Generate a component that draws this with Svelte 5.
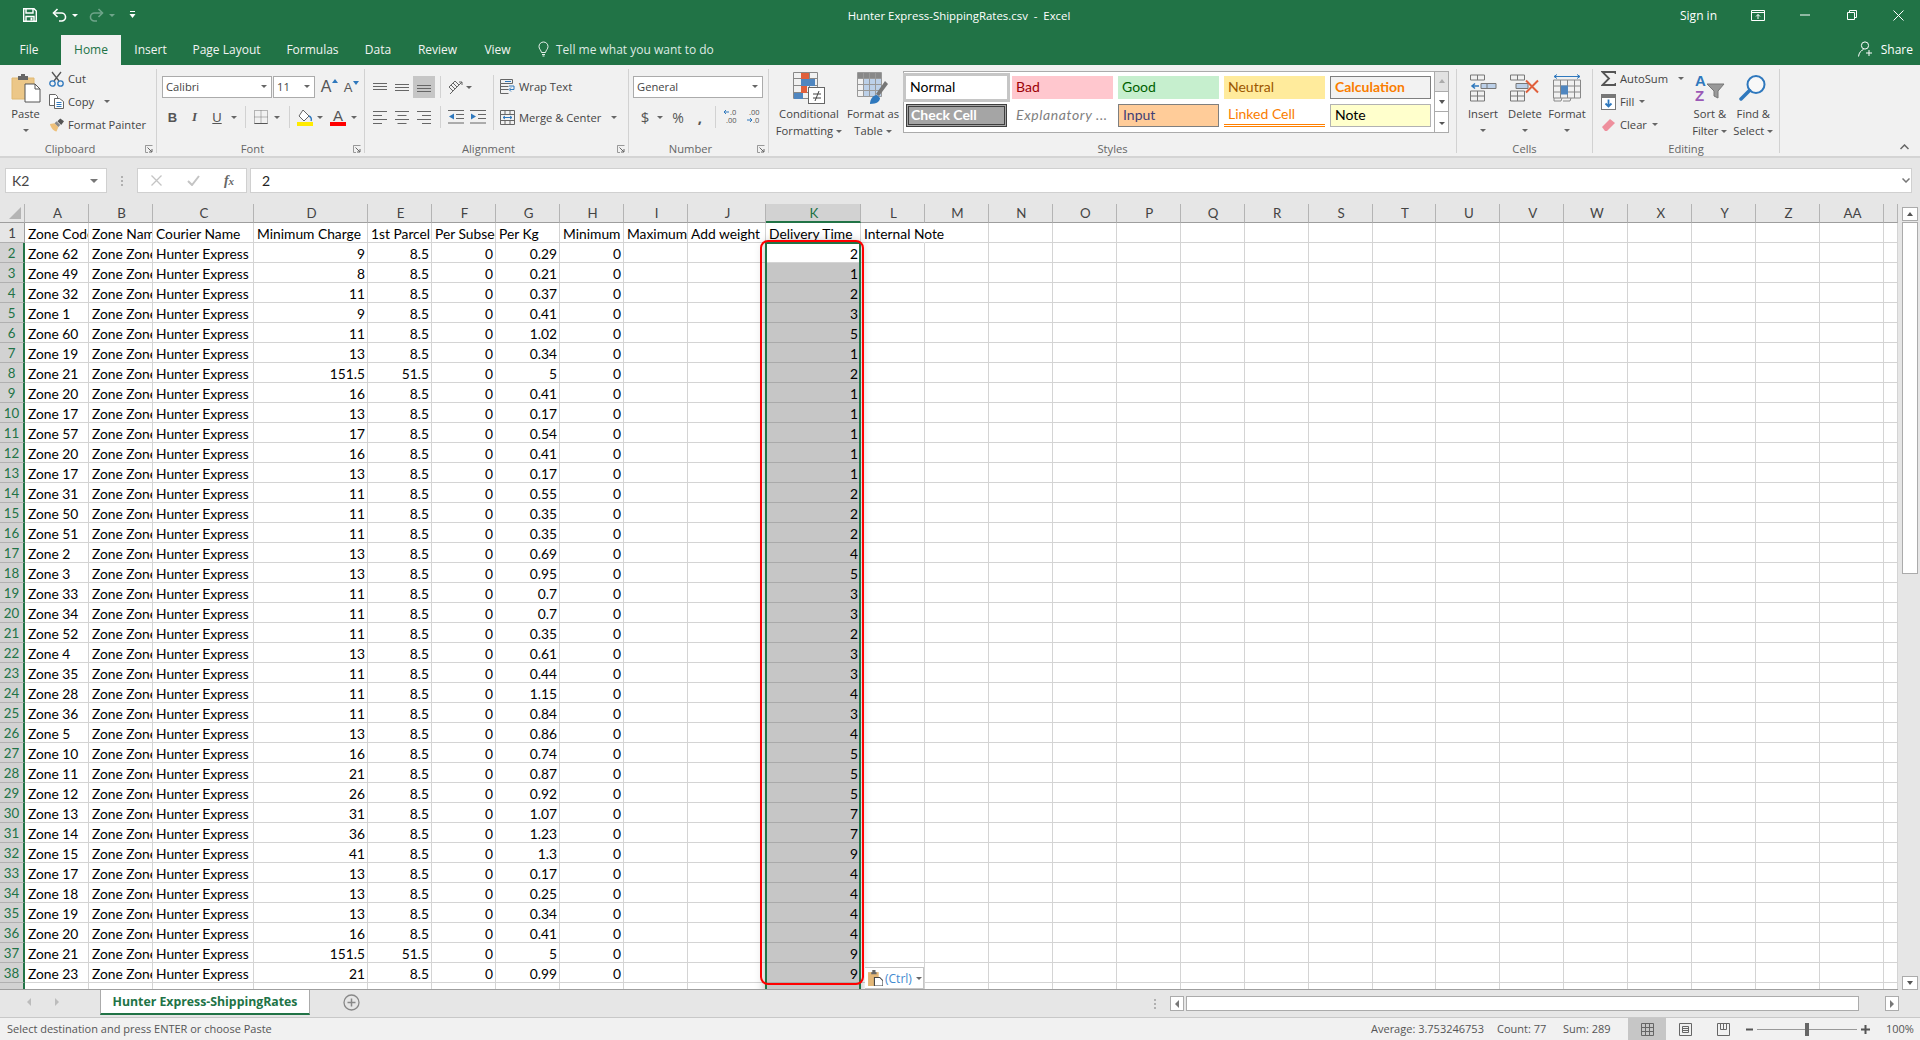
<script>
  const letters = "ABCDEFGHIJKLMNOPQRSTUVWXYZ".split("").concat(["AA", ""]);
  const headers = ["Zone Code", "Zone Name", "Courier Name", "Minimum Charge", "1st Parcel", "Per Subsequent", "Per Kg", "Minimum", "Maximum", "Add weight", "Delivery Time", "Internal Note"];

  // zone, min charge, 1st parcel, per kg, delivery time
  const data = [
    ["Zone 62", "9", "8.5", "0.29", "2"], ["Zone 49", "8", "8.5", "0.21", "1"], ["Zone 32", "11", "8.5", "0.37", "2"],
    ["Zone 1", "9", "8.5", "0.41", "3"], ["Zone 60", "11", "8.5", "1.02", "5"], ["Zone 19", "13", "8.5", "0.34", "1"],
    ["Zone 21", "151.5", "51.5", "5", "2"], ["Zone 20", "16", "8.5", "0.41", "1"], ["Zone 17", "13", "8.5", "0.17", "1"],
    ["Zone 57", "17", "8.5", "0.54", "1"], ["Zone 20", "16", "8.5", "0.41", "1"], ["Zone 17", "13", "8.5", "0.17", "1"],
    ["Zone 31", "11", "8.5", "0.55", "2"], ["Zone 50", "11", "8.5", "0.35", "2"], ["Zone 51", "11", "8.5", "0.35", "2"],
    ["Zone 2", "13", "8.5", "0.69", "4"], ["Zone 3", "13", "8.5", "0.95", "5"], ["Zone 33", "11", "8.5", "0.7", "3"],
    ["Zone 34", "11", "8.5", "0.7", "3"], ["Zone 52", "11", "8.5", "0.35", "2"], ["Zone 4", "13", "8.5", "0.61", "3"],
    ["Zone 35", "11", "8.5", "0.44", "3"], ["Zone 28", "11", "8.5", "1.15", "4"], ["Zone 36", "11", "8.5", "0.84", "3"],
    ["Zone 5", "13", "8.5", "0.86", "4"], ["Zone 10", "16", "8.5", "0.74", "5"], ["Zone 11", "21", "8.5", "0.87", "5"],
    ["Zone 12", "26", "8.5", "0.92", "5"], ["Zone 13", "31", "8.5", "1.07", "7"], ["Zone 14", "36", "8.5", "1.23", "7"],
    ["Zone 15", "41", "8.5", "1.3", "9"], ["Zone 17", "13", "8.5", "0.17", "4"], ["Zone 18", "13", "8.5", "0.25", "4"],
    ["Zone 19", "13", "8.5", "0.34", "4"], ["Zone 20", "16", "8.5", "0.41", "4"], ["Zone 21", "151.5", "51.5", "5", "9"],
    ["Zone 23", "21", "8.5", "0.99", "9"],
  ];

  const tabs = ["Home", "Insert", "Page Layout", "Formulas", "Data", "Review", "View"];
  const trailing = Array(16).fill("");

  const styles = [
    ["Normal", "normal"], ["Bad", "bad"], ["Good", "good"], ["Neutral", "neutral"], ["Calculation", "calc"],
    ["Check Cell", "check"], ["Explanatory ...", "expl"], ["Input", "input"], ["Linked Cell", "linked"], ["Note", "note"],
  ];
</script>

{#snippet launcher()}
  <svg class="launcher" width="8" height="8" viewBox="0 0 8 8"><path d="M.5 3V.5H7.5M.5.5V7.5H3" fill="none" stroke="#999"/><path d="M2.5 2.5 7 7M7 4v3H4" fill="none" stroke="#666"/></svg>
{/snippet}

<div class="window">
  <header class="titlebar">
    <div class="qat">
      <svg width="14" height="14" viewBox="0 0 14 14"><path d="M.7.7H11L13.3 3V13.3H.7Z" fill="none" stroke="#fff" stroke-width="1.4"/><path d="M3 1v4H10V1M3 13V8.5H11V13" fill="none" stroke="#fff" stroke-width="1.4"/><rect x="7.5" y="9.5" width="2" height="3" fill="#fff"/></svg>
      <svg class="undo" width="15" height="15" viewBox="0 0 15 15"><path d="M5.5 1 1.5 5l4 4" fill="none" stroke="#fff" stroke-width="1.6"/><path d="M2 5h7a4 4 0 0 1 1 8H7" fill="none" stroke="#fff" stroke-width="1.6"/></svg>
      <span class="caret white"></span>
      <svg class="redo" width="15" height="15" viewBox="0 0 15 15"><path d="M9.5 1l4 4-4 4" fill="none" stroke="#6fa58a" stroke-width="1.6"/><path d="M13 5H6a4 4 0 0 0-1 8h3" fill="none" stroke="#6fa58a" stroke-width="1.6"/></svg>
      <span class="caret dim"></span>
      <svg class="customize" width="7" height="8" viewBox="0 0 7 8"><path d="M1 .5h5" stroke="#fff"/><path d="M.5 3h6L3.500 7Z" fill="#fff"/></svg>
    </div>
    <div class="doc-title">Hunter Express-ShippingRates.csv&nbsp; -&nbsp; Excel</div>
    <div class="win-controls">
      <span class="signin">Sign in</span>
      <svg class="ctl-display" width="14" height="11" viewBox="0 0 14 11"><path d="M.5.500h13v10H.5ZM.5 2.500h13" fill="none" stroke="#fff"/><path d="M7 9V4.500M5 6.500l2-2 2 2" fill="none" stroke="#fff"/></svg>
      <svg class="ctl-min" width="10" height="2" viewBox="0 0 10 2"><path d="M0 1h10" stroke="#fff"/></svg>
      <svg class="ctl-restore" width="10" height="10" viewBox="0 0 10 10"><path d="M.5 2.500h7v7h-7ZM2.500 2.500v-2h7v7h-2" fill="none" stroke="#fff"/></svg>
      <svg class="ctl-close" width="11" height="11" viewBox="0 0 11 11"><path d="M.5.500l10 10M10.500.5l-10 10" stroke="#fff"/></svg>
    </div>
  </header>

  <nav class="tabs">
    <span class="tab file">File</span>
    {#each tabs as t, i}
      <span class="tab" class:active={i === 0}>{t}</span>
    {/each}
    <span class="tellme">
      <svg width="11" height="16" viewBox="0 0 11 16"><path d="M3.500 11.500C3 9 1 8 1 5.500a4.500 4.500 0 0 1 9 0C10 8 8 9 7.500 11.500ZM4 13.500h3M4.500 15h2" fill="none" stroke="#fff" stroke-width=".9"/></svg>
      Tell me what you want to do
    </span>
    <span class="share">
      <svg width="16" height="16" viewBox="0 0 16 16"><circle cx="7" cy="4.500" r="3.600" fill="none" stroke="#fff"/><path d="M.5 15.500c.5-4 2.500-6 5-7M11 9v6M8 12h6" fill="none" stroke="#fff"/></svg>
      Share
    </span>
  </nav>

  <section class="ribbon">
    <div class="group clipboard">
      <div class="body">
        <div class="big paste">
          <svg width="30" height="30" viewBox="0 0 30 30"><path d="M1 5h22v21H1Z" fill="#ecc788" stroke="#e0b973"/><path d="M7 3h3V1h4v2h3v4H7Z" fill="#666"/><path d="M14 11h10l5 5v13H14Z" fill="#fff" stroke="#555"/><path d="M24 11v5h5" fill="none" stroke="#555"/></svg>
          <span class="big-label">Paste</span>
          <span class="caret solo"></span>
        </div>
        <div class="stack">
          <div class="line">
            <svg width="15" height="16" viewBox="0 0 15 16"><path d="M3 1l7 9M12 1l-7 9" stroke="#555" stroke-width="1.3"/><circle cx="3.500" cy="12.500" r="2.700" fill="none" stroke="#2f78bd" stroke-width="1.3"/><circle cx="11.500" cy="12.500" r="2.700" fill="none" stroke="#2f78bd" stroke-width="1.3"/></svg>
            Cut
          </div>
          <div class="line">
            <svg width="15" height="15" viewBox="0 0 15 15"><path d="M.5.500h6l2 2v9h-8Z" fill="#fff" stroke="#666"/><path d="M5.500 4.500h5l4 3v7h-9Z" fill="#fff" stroke="#666"/><path d="M7.500 8.500h5M7.500 10.500h5M7.500 12.500h5" stroke="#2f78bd"/></svg>
            Copy <span class="caret copy-caret"></span>
          </div>
          <div class="line">
            <svg width="16" height="14" viewBox="0 0 16 14"><path d="M1 6l5-1 4 4-2 5c-3 0-6-4-7-8Z" fill="#eec07a"/><path d="M6 5l4 4 2-2-4-4Z" fill="#888"/><path d="M9 3l3-3 4 3-3 4Z" fill="#555"/></svg>
            Format Painter
          </div>
        </div>
      </div>
      <div class="label launch">Clipboard {@render launcher()}</div>
    </div>

    <div class="group font">
      <div class="body column">
        <div class="font-row1">
          <div class="field"><span>Calibri</span><span class="caret"></span></div>
          <div class="field"><span>11</span><span class="caret"></span></div>
          <span class="grow">A<i class="tri up"></i></span>
          <span class="shrink">A<i class="tri down"></i></span>
        </div>
        <div class="font-row2">
          <b class="fmt">B</b>
          <i class="fmt serif">I</i>
          <u class="fmt">U</u>
          <span class="caret"></span>
          <span class="sep"></span>
          <svg width="14" height="14" viewBox="0 0 14 14"><path d="M.5.500h13v13H.5ZM7 .5v13M.5 7h13" fill="none" stroke="#777" stroke-dasharray="1 1"/><path d="M.5 13.500h13" stroke="#555"/></svg>
          <span class="caret"></span>
          <span class="sep"></span>
          <svg width="16" height="17" viewBox="0 0 16 17"><path d="M6 1l6 6-5 5-5-5Z" fill="#fff" stroke="#666"/><path d="M12 7c2 1 3 3 2 5" fill="none" stroke="#2f78bd" stroke-width="1.400"/><rect y="13" width="16" height="4" fill="#ffeb00"/></svg>
          <span class="caret"></span>
          <div class="font-color"><span>A</span><i></i></div>
          <span class="caret"></span>
        </div>
      </div>
      <div class="label launch">Font {@render launcher()}</div>
    </div>

    <div class="group alignment">
      <div class="body">
        <div class="align-col">
          <div class="align-row1">
            <svg width="14" height="9" viewBox="0 0 14 9"><path d="M0 .5h14M0 3.500h14M0 6.500h14" stroke="#666"/></svg>
            <svg width="14" height="9" viewBox="0 0 14 9"><path d="M0 1.500h14M0 4.500h14M0 7.500h14" stroke="#666"/></svg>
            <span class="on"><svg width="14" height="9" viewBox="0 0 14 9"><path d="M0 2.500h14M0 5.500h14M0 8.500h14" stroke="#666"/></svg></span>
            <span class="sep"></span>
            <svg width="17" height="16" viewBox="0 0 17 16"><path d="M2 8l6-6 4 4-6 6Z" fill="none" stroke="#666"/><path d="M4 6l4 4M6 4l4 4" stroke="#666"/><path d="M3 15 15 3M12 3h3v3" fill="none" stroke="#666"/></svg>
            <span class="caret"></span>
          </div>
          <div class="align-row2">
            <svg width="14" height="13" viewBox="0 0 14 13"><path d="M0 .5h14M0 4.500h9M0 8.500h14M0 12.500h9" stroke="#666"/></svg>
            <svg width="14" height="13" viewBox="0 0 14 13"><path d="M0 .5h14M2.500 4.500h9M0 8.500h14M2.500 12.500h9" stroke="#666"/></svg>
            <svg width="14" height="13" viewBox="0 0 14 13"><path d="M0 .5h14M5 4.500h9M0 8.500h14M5 12.500h9" stroke="#666"/></svg>
            <span class="sep"></span>
            <svg width="16" height="14" viewBox="0 0 16 14"><path d="M0 .5h16M8 4.500h8M8 8.500h8M0 13h16" stroke="#666"/><path d="M6 3.500 1 6.500l5 3Z" fill="#2f78bd"/></svg>
            <svg width="16" height="14" viewBox="0 0 16 14"><path d="M0 .5h16M8 4.500h8M8 8.500h8M0 13h16" stroke="#666"/><path d="M1 3.500l5 3-5 3Z" fill="#2f78bd"/></svg>
          </div>
        </div>
        <span class="vsep"></span>
        <div class="wrap-col">
          <div class="line">
            <svg width="15" height="15" viewBox="0 0 15 15"><path d="M.5.500h12v4H.5ZM.5 4.500v10h8M.5 7.500h8M.5 10.500h8" fill="none" stroke="#666"/><path d="M5 2.500h6M9 7h5v3.500h-4M11 8.500l-2 2 2 2" fill="none" stroke="#2f78bd"/></svg>
            Wrap Text
          </div>
          <div class="line">
            <svg width="15" height="15" viewBox="0 0 15 15"><path d="M.5.500h14v14H.5ZM.5 4.500h14M.5 10.500h14M5 .5v4M10 .5v4M5 10.500v4M10 10.500v4" fill="none" stroke="#666"/><path d="M3 7.500h9M5 6l-2 1.500L5 9M10 6l2 1.500L10 9" fill="none" stroke="#2f78bd"/></svg>
            Merge &amp; Center <span class="caret merge-caret"></span>
          </div>
        </div>
      </div>
      <div class="label launch">Alignment {@render launcher()}</div>
    </div>

    <div class="group number">
      <div class="body column">
        <div class="field general"><span>General</span><span class="caret"></span></div>
        <div class="num-row2">
          <span class="dollar">$</span>
          <span class="caret"></span>
          <span class="pct">%</span>
          <span class="comma">,</span>
          <span class="sep"></span>
          <svg width="16" height="16" viewBox="0 0 16 16"><path d="M6 3H1M3 1 1 3l2 2" fill="none" stroke="#2f78bd"/><text x="7" y="6" class="tiny">.0</text><text x="3" y="14" class="tiny">.00</text></svg>
          <svg width="16" height="16" viewBox="0 0 16 16"><text x="3" y="6" class="tiny">.00</text><path d="M1 11h5M4 9l2 2-2 2" fill="none" stroke="#2f78bd"/><text x="7" y="14" class="tiny">.0</text></svg>
        </div>
      </div>
      <div class="label launch">Number {@render launcher()}</div>
    </div>

    <div class="group styles-group">
      <div class="body">
        <div class="big">
          <svg width="32" height="32" viewBox="0 0 32 32"><path d="M.5.500h24v26H.5ZM8.500.5v26M16.500.5v20M.5 6.500h24M.5 13.500h24M.5 20.500h24" fill="none" stroke="#888"/><rect x="8" y="1" width="8" height="6" fill="#e0603c"/><rect x="8" y="7" width="14" height="7" fill="#4f86c0"/><rect x="8" y="14" width="6" height="7" fill="#e0603c"/><rect x="1" y="21" width="9" height="6" fill="#4f86c0"/><rect x="15.500" y="15.500" width="16" height="16" fill="#fff" stroke="#666"/><path d="M20 22h8M20 26h8M22 29l4-10" stroke="#444"/></svg>
          <span class="big-label">Conditional</span>
          <span class="big-label">Formatting<span class="caret inline"></span></span>
        </div>
        <div class="big">
          <svg width="32" height="32" viewBox="0 0 32 32"><rect x="1" y="1" width="24" height="6" fill="#888"/><rect x="7" y="7" width="18" height="18" fill="#bcd0e8"/><path d="M.5.500h24v24H.5ZM6.500.5v24M12.500.5v24M18.500.5v24M.5 6.500h24M.5 12.500h24M.5 18.500h24" fill="none" stroke="#999"/><path d="M19 22 28 9l3 3-9 12Z" fill="#777"/><path d="M13 32c0-5 3-9 7-9l3 3c0 3-3 6-10 6Z" fill="#2f78bd"/></svg>
          <span class="big-label">Format as</span>
          <span class="big-label">Table<span class="caret inline"></span></span>
        </div>
        <div class="gallery">
          <div class="gallery-grid">
            {#each styles as [name, cls]}
              <span class="style-cell {cls}">{name}</span>
            {/each}
          </div>
          <div class="spin">
            <span class="spin-btn off"><i class="tri up grey"></i></span>
            <span class="spin-btn"><i class="tri down dark"></i></span>
            <span class="spin-btn more"><i class="tri down dark"></i></span>
          </div>
        </div>
      </div>
      <div class="label">Styles</div>
    </div>

    <div class="group cells">
      <div class="body">
        <div class="big">
          <svg width="27" height="27" viewBox="0 0 27 27"><path d="M.5.500h14v5H.5ZM7.500.5v5M.5 16.500h14v10H.5ZM.5 21.500h14M7.500 16.500v10" fill="none" stroke="#777"/><path d="M11 9h15v5H11Z" fill="#bcd0e8" stroke="#777"/><path d="M17 9v5" stroke="#777"/><path d="M9 11.500H2M5 9l-3 2.500L5 14" fill="none" stroke="#2f78bd" stroke-width="1.500"/></svg>
          <span class="big-label">Insert</span>
          <span class="caret solo"></span>
        </div>
        <div class="big">
          <svg width="30" height="27" viewBox="0 0 30 27"><path d="M.5.500h14v5H.5ZM7.500.5v5M.5 16.500h14v10H.5ZM.5 21.500h14M7.500 16.500v10" fill="none" stroke="#777"/><path d="M6 9h12v5H6Z" fill="#bcd0e8" stroke="#777"/><path d="M16 6l12 12M28 6 16 18" stroke="#e0603c" stroke-width="2"/></svg>
          <span class="big-label">Delete</span>
          <span class="caret solo"></span>
        </div>
        <div class="big">
          <svg width="28" height="29" viewBox="0 0 28 29"><path d="M1 3h26M4 1 1 3l3 2M24 1l3 2-3 2" fill="none" stroke="#2f78bd"/><path d="M.5 6.500h27v18H.5ZM7.500 6.500v18M14.500 6.500v18M21.500 6.500v18M.5 12.500h27M.5 18.500h27" fill="none" stroke="#888"/><rect x="8" y="12" width="7" height="9" fill="#4f86c0"/><path d="M1 24.500v3h7l1-3M10 27.500h7l1-3" fill="none" stroke="#888"/></svg>
          <span class="big-label">Format</span>
          <span class="caret solo"></span>
        </div>
      </div>
      <div class="label">Cells</div>
    </div>

    <div class="group editing">
      <div class="body">
        <div class="stack edit-stack">
          <div class="line">
            <svg width="15" height="15" viewBox="0 0 15 15"><path d="M14.500 3V1H1.500L8 7.500 1.500 14h13v-2" fill="none" stroke="#555" stroke-width="1.800"/></svg>
            AutoSum <span class="caret sum-caret"></span>
          </div>
          <div class="line">
            <svg width="15" height="16" viewBox="0 0 15 16"><rect x=".5" y=".5" width="14" height="15" fill="#fff" stroke="#777"/><rect x="1" y="1" width="13" height="3" fill="#777"/><path d="M7.500 5.500v7M4.500 9.500l3 3 3-3" fill="none" stroke="#2f78bd" stroke-width="1.800"/></svg>
            Fill<span class="caret"></span>
          </div>
          <div class="line">
            <svg width="15" height="14" viewBox="0 0 15 14"><path d="M1 9l8-8 5 4-8 8H4Z" fill="#ee8f9d"/></svg>
            Clear<span class="caret"></span>
          </div>
        </div>
        <div class="big">
          <svg width="30" height="28" viewBox="0 0 30 28"><text x="0" y="12" class="az a">A</text><text x="0" y="27" class="az z">Z</text><path d="M12 10h17l-6 7v7l-4-2v-5Z" fill="#999" stroke="#777"/></svg>
          <span class="big-label">Sort &amp;</span>
          <span class="big-label">Filter<span class="caret inline"></span></span>
        </div>
        <div class="big">
          <svg width="28" height="28" viewBox="0 0 28 28"><circle cx="17" cy="10.500" r="8.500" fill="#fff" fill-opacity=".5" stroke="#2f78bd" stroke-width="2"/><path d="M10.500 16.500 2 25" stroke="#2f78bd" stroke-width="3.500" stroke-linecap="round"/></svg>
          <span class="big-label">Find &amp;</span>
          <span class="big-label">Select<span class="caret inline"></span></span>
        </div>
      </div>
      <div class="label">Editing</div>
    </div>

    <svg class="collapse" width="9" height="6" viewBox="0 0 9 6"><path d="M.5 5 4.500 1l4 4" fill="none" stroke="#666" stroke-width="1.500"/></svg>
  </section>

  <div class="formula">
    <div class="namebox"><span>K2</span><span class="caret big-caret"></span></div>
    <div class="dots"><i></i><i></i><i></i></div>
    <div class="fx-box">
      <svg width="11" height="11" viewBox="0 0 11 11"><path d="M.5.500l10 10M10.500.5l-10 10" stroke="#c4c4c4" stroke-width="1.300"/></svg>
      <svg width="13" height="11" viewBox="0 0 13 11"><path d="M1 6l4 4 7-9" fill="none" stroke="#c4c4c4" stroke-width="2"/></svg>
      <span class="fx">f<small>x</small></span>
    </div>
    <div class="formula-input"><span>2</span><svg width="8" height="5" viewBox="0 0 8 5"><path d="M.5.500 4 4 7.500.5" fill="none" stroke="#777" stroke-width="1.500"/></svg></div>
  </div>

  <div class="sheet-area">
    <div class="sheet-wrap">
      <div class="sheet">
        <div class="ch corner"><i></i></div>
        {#each letters as l}
          <div class="ch" class:sel={l === "K"}>{l}</div>
        {/each}

        <div class="rh first">1</div>
        {#each headers as h, i}
          <div class="c" class:spill={i === 11}>{h}</div>
        {/each}
        {#each trailing as _}
          <div class="c"></div>
        {/each}

        {#each data as r, i}
          <div class="rh">{i + 2}</div>
          <div class="c">{r[0]}</div>
          <div class="c">Zone Zone</div>
          <div class="c">Hunter Express</div>
          <div class="c n">{r[1]}</div>
          <div class="c n">{r[2]}</div>
          <div class="c n">0</div>
          <div class="c n">{r[3]}</div>
          <div class="c n">0</div>
          <div class="c"></div>
          <div class="c"></div>
          <div class="c n" class:marked={i > 0}>{r[4]}</div>
          <div class="c"></div>
          {#each trailing as _}
            <div class="c"></div>
          {/each}
        {/each}

        <div class="rh"></div>
        {#each letters as l}
          <div class="c" class:marked={l === "K"}></div>
        {/each}
      </div>

      <div class="selection"></div>
      <div class="annotation"></div>
      <div class="paste-tag">
        <svg width="15" height="16" viewBox="0 0 14 15"><path d="M0 2h10v13H0Z" fill="#e3b777"/><path d="M3 2h1V0h3v2h1v2H3Z" fill="#666"/><path d="M6 7h5l3 3v5H6Z" fill="#fff" stroke="#444"/></svg>
        <span>(Ctrl)</span>
        <span class="caret"></span>
      </div>
    </div>

    <div class="vscroll">
      <span class="sb-btn"><i class="tri up dark"></i></span>
      <span class="sb-thumb"></span>
      <span class="sb-fill"></span>
      <span class="sb-btn"><i class="tri down dark"></i></span>
    </div>
  </div>

  <div class="sheet-tabs">
    <div class="nav-arrows"><i class="arrow left"></i><i class="arrow right"></i></div>
    <div class="sheet-tab">Hunter Express-ShippingRates</div>
    <div class="add-sheet">
      <svg width="17" height="17" viewBox="0 0 17 17"><circle cx="8.500" cy="8.500" r="7.500" fill="none" stroke="#888" stroke-width="1.300"/><path d="M8.500 4.500v8M4.500 8.500h8" stroke="#888" stroke-width="1.500"/></svg>
    </div>
    <div></div>
    <div class="dots h"><i></i><i></i><i></i></div>
    <div class="hscroll">
      <span class="hb"><i class="arrow left dark"></i></span>
      <span class="h-thumb"></span>
      <span class="h-track"></span>
      <span class="hb"><i class="arrow right dark"></i></span>
    </div>
  </div>

  <footer class="status">
    <span class="msg">Select destination and press ENTER or choose Paste</span>
    <div class="status-right">
      <span>Average: 3.753246753</span>
      <span>Count: 77</span>
      <span>Sum: 289</span>
      <span class="view on">
        <svg width="13" height="13" viewBox="0 0 13 13"><path d="M.5.500h12v12H.5ZM4.500.5v12M8.500.5v12M.5 4.500h12M.5 8.500h12" fill="none" stroke="#666"/></svg>
      </span>
      <span class="view">
        <svg width="13" height="13" viewBox="0 0 13 13"><path d="M.5.500h12v12H.5ZM3.500 3.500h6v6h-6ZM3.500 5.500h6M3.500 7.500h6" fill="none" stroke="#666"/></svg>
      </span>
      <span class="view">
        <svg width="13" height="13" viewBox="0 0 13 13"><path d="M.5.500h12v12H.5ZM3.500.5v6h6v-6M6.500.5v6" fill="none" stroke="#666"/></svg>
      </span>
      <span class="view"><svg width="7" height="3" viewBox="0 0 7 3"><path d="M0 1.500h7" stroke="#555" stroke-width="2"/></svg></span>
      <div class="slider"><i></i></div>
      <span class="view"><svg width="9" height="9" viewBox="0 0 9 9"><path d="M0 4.500h9M4.500 0v9" stroke="#555" stroke-width="2"/></svg></span>
      <span class="zoom">100%</span>
    </div>
  </footer>
</div>

<style>
  :global(body) {
    margin: 0;
    background: #e6e6e6;
    overflow: hidden;
  }

  .window {
    width: 1920px;
    height: 1040px;
    display: flex;
    flex-direction: column;
    font-family: "Open Sans", "Noto Sans", sans-serif;
    font-size: 11.2px;
    color: #444;
    overflow: hidden;
  }

  .caret {
    display: inline-block;
    width: 0;
    height: 0;
    border-left: 3px solid transparent;
    border-right: 3px solid transparent;
    border-top: 3px solid #666;
  }
  .caret.white { border-top-color: #fff; }
  .caret.dim { border-top-color: #6fa58a; }
  .caret.solo { margin-top: 7px; }
  .caret.inline { margin-left: 3px; vertical-align: 2px; }

  .tri {
    display: inline-block;
    width: 0;
    height: 0;
    border-left: 3.5px solid transparent;
    border-right: 3.5px solid transparent;
  }
  .tri.up { border-bottom: 4px solid #2f78bd; }
  .tri.down { border-top: 4px solid #2f78bd; }
  .tri.up.dark { border-bottom-color: #555; }
  .tri.down.dark { border-top-color: #555; }
  .tri.up.grey { border-bottom-color: #aaa; }

  /* title bar */
  .titlebar {
    height: 35px;
    background: #217346;
    display: grid;
    grid-template-columns: 1fr auto 1fr;
    align-items: center;
    color: #fff;
    padding-bottom: 5px;
    box-sizing: border-box;
  }
  .qat {
    display: flex;
    align-items: center;
    padding-left: 23px;
  }
  .undo { margin-left: 15px; }
  .qat .caret { margin-left: 5px; }
  .redo { margin-left: 11px; }
  .customize { margin-left: 14px; }
  .doc-title {
    font-size: 11.4px;
    padding-right: 2px;
  }
  .win-controls {
    display: flex;
    justify-content: flex-end;
    align-items: center;
    font-size: 12px;
    padding-right: 16px;
  }
  .signin { margin-right: 34px; }
  .ctl-min { margin-left: 35px; }
  .ctl-restore { margin-left: 37px; }
  .ctl-close { margin-left: 36px; }

  .tabs {
    height: 30px;
    background: #217346;
    color: #f3f3f3;
    display: grid;
    grid-template-columns: 61px 60px 59px 93px 79px 52px 67px 53px 1fr auto;
    align-items: stretch;
    font-size: 12px;
  }
  .tab {
    display: flex;
    align-items: center;
    justify-content: center;
    padding-bottom: 2px;
    box-sizing: border-box;
  }
  .tab.file { padding-right: 3px; }
  .tab.active {
    background: #f1f1f1;
    color: #217346;
  }
  .tellme {
    display: flex;
    align-items: center;
    gap: 7px;
    padding: 0 0 2px 14px;
    color: #dfeae4;
  }
  .share {
    display: flex;
    align-items: center;
    gap: 7px;
    padding: 0 7px 2px 0;
    color: #fff;
  }

  /* ribbon */
  .ribbon {
    position: relative;
    background: #f1f1f1;
    border-bottom: 2px solid #d4d4d4;
    display: flex;
    padding-top: 4px;
    box-sizing: border-box;
    height: 93px;
  }
  .group {
    height: 84px;
    display: flex;
    flex-direction: column;
    border-right: 1px solid #d2d2d2;
    box-sizing: border-box;
    flex: none;
  }
  .clipboard { width: 157px; }
  .font { width: 208px; }
  .alignment { width: 264px; }
  .number { width: 140px; }
  .styles-group { width: 688px; }
  .cells { width: 136px; }
  .editing { width: 187px; }
  .font .body { padding-left: 5px; }
  .alignment .body { padding-left: 4px; }
  .number .body { padding-left: 4px; }
  .styles-group .body { padding-left: 7px; }
  .cells .body { padding-left: 5px; }
  .editing .body { padding-left: 8px; }

  .body {
    height: 72px;
    display: flex;
    flex: none;
    margin-top: -1px;
    box-sizing: border-box;
  }
  .body.column {
    flex-direction: column;
    padding-top: 8px;
  }
  .label {
    position: relative;
    height: 16px;
    line-height: 16px;
    text-align: center;
    color: #666;
    margin-top: 1px;
  }
  .label.launch { padding-right: 16px; }
  .launcher {
    position: absolute;
    right: 3px;
    top: 4px;
  }

  .big {
    display: flex;
    flex-direction: column;
    align-items: center;
    width: 42px;
    padding-top: 4px;
    box-sizing: border-box;
  }
  .big svg {
    height: 32px;
    flex: none;
  }
  .big-label {
    line-height: 17px;
    white-space: nowrap;
  }
  .big svg + .big-label { margin-top: 1px; }
  .big.paste {
    width: 39px;
    margin: 0 4px 0 6px;
  }

  .stack {
    display: flex;
    flex-direction: column;
    flex: none;
    margin-top: -1px;
  }
  .line {
    height: 23px;
    display: flex;
    align-items: center;
    white-space: nowrap;
  }
  .line svg {
    width: 15px;
    margin-right: 4px;
    flex: none;
  }
  .line .caret { margin-left: 5px; }
  .line .copy-caret, .line .merge-caret, .line .sum-caret { margin-left: 10px; }
  .edit-stack { width: 91px; }

  .field {
    height: 22px;
    box-sizing: border-box;
    background: #fff;
    border: 1px solid #ababab;
    display: flex;
    align-items: center;
    justify-content: space-between;
    padding: 0 4px 1px 3px;
  }
  .font-row1 {
    display: grid;
    grid-template-columns: 110px 42px 20px 22px;
    column-gap: 1px;
    align-items: center;
    height: 22px;
  }
  .grow, .shrink {
    position: relative;
    font-family: "Liberation Sans", sans-serif;
    color: #555;
    text-align: center;
  }
  .grow { font-size: 16px; }
  .shrink { font-size: 13px; }
  .grow .tri, .shrink .tri {
    position: absolute;
    top: 1px;
    right: -2px;
  }
  .shrink .tri { right: 0; }
  .font-row2 {
    margin-top: 8px;
    height: 22px;
    display: grid;
    grid-template-columns: 21px 23px 22px 12px 10px 21px 12px 12px 20px 10px 26px 6px;
    align-items: center;
    justify-items: center;
  }
  .fmt {
    font-family: "Liberation Sans", sans-serif;
    font-size: 13px;
    color: #555;
  }
  .serif { font-family: "Liberation Serif", serif; font-weight: bold; }
  .sep {
    width: 1px;
    height: 22px;
    background: #d2d2d2;
    display: block;
  }
  .font-color {
    display: flex;
    flex-direction: column;
    align-items: center;
    font-family: "Liberation Sans", sans-serif;
    font-size: 15px;
    line-height: 13px;
    color: #555;
    width: 16px;
  }
  .font-color i {
    display: block;
    width: 16px;
    height: 4px;
    background: #f00;
  }

  .align-col {
    width: 124px;
    padding-top: 8px;
    flex: none;
  }
  .align-row1, .align-row2 {
    display: grid;
    align-items: center;
    justify-items: center;
    height: 22px;
  }
  .align-row1 { grid-template-columns: 22px 22px 22px 10px 20px 8px; }
  .align-row2 { grid-template-columns: 22px 22px 22px 10px 22px 22px; margin-top: 8px; }
  .on {
    background: #c6c6c6;
    width: 22px;
    height: 22px;
    display: flex;
    align-items: center;
    justify-content: center;
  }
  .vsep {
    width: 1px;
    height: 55px;
    margin-top: 7px;
    background: #d2d2d2;
    flex: none;
  }
  .wrap-col {
    margin-left: 6px;
    padding-top: 7px;
    display: flex;
    flex-direction: column;
    row-gap: 9px;
  }
  .wrap-col .line { height: 22px; }

  .general { width: 130px; }
  .num-row2 {
    margin-top: 8px;
    height: 22px;
    display: grid;
    grid-template-columns: 24px 6px 30px 14px 16px 23px 16px;
    align-items: center;
    justify-items: center;
  }
  .dollar { font-size: 15px; color: #555; }
  .pct { font-size: 14px; color: #555; }
  .comma { font-size: 15px; font-weight: bold; color: #555; line-height: 10px; }
  .num-row2 svg:first-of-type { justify-self: start; }
  .tiny {
    font-size: 7.500px;
    fill: #555;
  }

  .styles-group .big { width: 64px; }
  .styles-group .big:first-child { margin-left: 1px; width: 64px; }
  .gallery {
    margin: 3px 0 0 -2px;
    width: 546px;
    height: 62px;
    display: flex;
    flex: none;
  }
  .gallery-grid {
    width: 532px;
    height: 62px;
    box-sizing: border-box;
    background: #fff;
    border: 1px solid #ababab;
    padding: 4px 2px 0 2px;
    display: grid;
    grid-template-columns: repeat(5, 101px);
    grid-template-rows: 23px 23px;
    column-gap: 5px;
    row-gap: 5px;
  }
  .style-cell {
    font-family: Lato, "Open Sans", sans-serif;
    font-size: 14px;
    display: flex;
    align-items: center;
    padding: 0 0 2px 4px;
    box-sizing: border-box;
    color: #000;
    white-space: nowrap;
    overflow: hidden;
  }
  .normal { background: #fff; outline: 3px solid #c6c6c6; }
  .bad { background: #ffc7ce; color: #9c0006; }
  .good { background: #c6efce; color: #006100; }
  .neutral { background: #ffeb9c; color: #9c5700; }
  .calc { background: #f2f2f2; color: #fa7d00; font-weight: bold; border: 1px solid #7f7f7f; }
  .style-cell.check { background: #a5a5a5; color: #fff; font-weight: bold; border: 3px double #3f3f3f; padding-left: 2px; }
  .expl { background: #fff; color: #7f7f7f; font-style: italic; letter-spacing: 0.6px; }
  .style-cell.input { background: #ffcc99; color: #3f3f76; border: 1px solid #7f7f7f; }
  .linked { background: #fff; color: #fa7d00; border-bottom: 3px double #ff8001; }
  .note { background: #ffffcc; color: #000; border: 1px solid #b2b2b2; }
  .spin {
    width: 14px;
    display: flex;
    flex-direction: column;
    flex: none;
  }
  .spin-btn {
    height: 20.700px;
    box-sizing: border-box;
    background: #fff;
    border: 1px solid #ababab;
    border-left: none;
    display: flex;
    align-items: center;
    justify-content: center;
  }
  .spin-btn + .spin-btn { border-top: none; }
  .spin-btn.off { background: #e2e2e2; }
  .spin-btn.more .tri { border-top-width: 3px; margin-top: 3px; }

  .cells .big { width: 42px; }
  .editing .big { width: 36px; }
  .editing .big:last-child { width: 52px; }
  .az {
    font-family: "Liberation Sans", sans-serif;
    font-weight: bold;
    font-size: 15px;
  }
  .az.a { fill: #2f78bd; }
  .az.z { fill: #9b59b6; }
  .collapse {
    position: absolute;
    right: 11px;
    bottom: 6px;
  }

  /* formula bar */
  .formula {
    height: 46px;
    box-sizing: border-box;
    padding: 10px 8px 0 5px;
    display: flex;
    align-items: flex-start;
    background: #e6e6e6;
  }
  .namebox, .fx-box, .formula-input {
    height: 25px;
    box-sizing: border-box;
    background: #fff;
    border: 1px solid #d0d0d0;
    display: flex;
    align-items: center;
    color: #222;
    font-family: Lato, sans-serif;
    font-size: 14px;
  }
  .namebox {
    width: 102px;
    justify-content: space-between;
    padding: 0 8px 0 6px;
    color: #444;
  }
  .big-caret {
    border-left-width: 4px;
    border-right-width: 4px;
    border-top-width: 4px;
    border-top-color: #777;
  }
  .dots {
    width: 30px;
    height: 25px;
    display: flex;
    flex-direction: column;
    align-items: center;
    justify-content: center;
    gap: 2px;
  }
  .dots i {
    width: 2px;
    height: 2px;
    background: #b0b0b0;
    display: block;
  }
  .dots.h { height: auto; align-self: center; }
  .fx-box {
    width: 110px;
    display: grid;
    grid-template-columns: 37px 36px 36px;
    justify-items: center;
  }
  .fx {
    font-family: "Liberation Serif", serif;
    font-style: italic;
    font-weight: bold;
    font-size: 14px;
    color: #666;
  }
  .fx small { font-size: 11px; }
  .formula-input {
    flex: 1;
    margin-left: 3px;
    justify-content: space-between;
    padding: 0 1px 0 11px;
  }

  /* sheet */
  .sheet-area {
    height: 786px;
    display: flex;
  }
  .sheet-wrap {
    position: relative;
    width: 1898px;
    height: 786px;
    overflow: hidden;
    border-bottom: 1px solid #9e9e9e;
    box-sizing: border-box;
    background: #fff;
  }
  .sheet {
    display: grid;
    grid-template-columns: 25px 64px 64px 101px 114px repeat(5, 64px) 78px 95px repeat(16, 63.950px) 14px;
    grid-template-rows: 19px;
    grid-auto-rows: 20px;
    font-family: Lato, "Open Sans", sans-serif;
    font-size: 13.800px;
    color: #000;
  }
  .ch {
    background: #e6e6e6;
    border-right: 1px solid #b4b4b4;
    border-bottom: 1px solid #9e9e9e;
    box-sizing: border-box;
    text-align: center;
    line-height: 18px;
    color: #444;
    font-size: 13.300px;
    padding-left: 2px;
  }
  .ch.sel {
    background: #d2d2d2;
    color: #217346;
    border-bottom: 2px solid #217346;
  }
  .corner {
    position: relative;
  }
  .corner i {
    position: absolute;
    right: 3px;
    bottom: 3px;
    width: 0;
    height: 0;
    border-left: 12px solid transparent;
    border-bottom: 12px solid #b4b4b4;
  }
  .rh {
    background: #d2d2d2;
    border-right: 2px solid #217346;
    border-bottom: 1px solid #b0b0b0;
    box-sizing: border-box;
    text-align: center;
    line-height: 20px;
    color: #217346;
    font-size: 13.300px;
  }
  .rh.first {
    background: #e6e6e6;
    color: #444;
    border-right: 1px solid #9e9e9e;
  }
  .c {
    border-right: 1px solid #d4d4d4;
    border-bottom: 1px solid #d4d4d4;
    box-sizing: border-box;
    padding: 0 1px 0 3px;
    line-height: 21px;
    white-space: nowrap;
    overflow: hidden;
  }
  .n {
    text-align: right;
    padding-right: 2px;
  }
  .spill {
    overflow: visible;
    border-right-color: transparent;
    position: relative;
  }
  .marked {
    background: #c6c6c6;
    border-bottom-color: #aaaaaa;
  }

  .selection {
    position: absolute;
    left: 765px;
    top: 38px;
    width: 96px;
    height: 760px;
    box-sizing: border-box;
    border: 2px solid #217346;
    box-shadow: 0 0 10px rgba(0, 0, 0, 0.28);
    pointer-events: none;
  }
  .annotation {
    position: absolute;
    left: 760px;
    top: 36px;
    width: 104px;
    height: 745px;
    box-sizing: border-box;
    border: 2px solid #f00;
    border-radius: 8px;
    pointer-events: none;
  }
  .paste-tag {
    position: absolute;
    left: 865px;
    top: 763px;
    width: 59px;
    height: 22px;
    box-sizing: border-box;
    background: #fff;
    border: 1px solid #c6c6c6;
    border-left: none;
    display: flex;
    align-items: center;
    padding-left: 3px;
    gap: 2px;
    font-size: 12px;
    color: #3f8ad0;
  }
  .paste-tag .caret { margin-left: 2px; }

  .vscroll {
    width: 22px;
    height: 786px;
    box-sizing: border-box;
    padding: 3px 2px 0 4px;
    display: flex;
    flex-direction: column;
    background: #e6e6e6;
  }
  .sb-btn {
    height: 14px;
    flex: none;
    box-sizing: border-box;
    background: #fff;
    border: 1px solid #ababab;
    display: flex;
    align-items: center;
    justify-content: center;
  }
  .sb-thumb {
    height: 352px;
    margin-top: 1px;
    box-sizing: border-box;
    background: #fff;
    border: 1px solid #ababab;
    flex: none;
  }
  .sb-fill { flex: 1; }

  /* sheet tabs */
  .sheet-tabs {
    height: 28px;
    box-sizing: border-box;
    display: grid;
    grid-template-columns: 100px 210px 82px 1fr 24px 735px 21px;
    background: #e6e6e6;
    border-bottom: 1px solid #c8c8c8;
  }
  .nav-arrows {
    display: flex;
    align-items: center;
    padding: 0 0 4px 27px;
    gap: 24px;
  }
  .arrow {
    display: block;
    width: 0;
    height: 0;
    border-top: 4px solid transparent;
    border-bottom: 4px solid transparent;
  }
  .arrow.left { border-right: 4px solid #bcbcbc; }
  .arrow.right { border-left: 4px solid #bcbcbc; }
  .arrow.dark.left { border-right-color: #777; }
  .arrow.dark.right { border-left-color: #777; }
  .sheet-tab {
    height: 25px;
    box-sizing: border-box;
    background: #fff;
    border: 1px solid #ababab;
    border-top: none;
    border-bottom: 2px solid #217346;
    color: #217346;
    font-weight: 700;
    font-size: 12.300px;
    display: flex;
    align-items: center;
    justify-content: center;
  }
  .add-sheet {
    display: flex;
    align-items: center;
    justify-content: center;
    padding-bottom: 2px;
  }
  .hscroll {
    display: flex;
    align-items: center;
    height: 15px;
    margin-top: 6px;
    padding-left: 6px;
  }
  .hb {
    width: 14px;
    height: 15px;
    flex: none;
    box-sizing: border-box;
    background: #fff;
    border: 1px solid #ababab;
    display: flex;
    align-items: center;
    justify-content: center;
  }
  .h-thumb {
    width: 673px;
    height: 15px;
    margin-left: 2px;
    box-sizing: border-box;
    background: #fff;
    border: 1px solid #ababab;
  }
  .h-track { flex: 1; }

  /* status bar */
  .status {
    flex: 1;
    background: #f1f1f1;
    display: flex;
    align-items: center;
    justify-content: space-between;
    padding-left: 7px;
    color: #555;
    font-size: 11px;
  }
  .status-right {
    height: 100%;
    display: grid;
    grid-template-columns: 126px 66px 65px 38px 38px 38px 15px 100px 16px 47px;
    align-items: center;
    white-space: nowrap;
  }
  .status-right > span:not(.view), .msg { margin-top: -2px; }
  .view {
    height: 100%;
    display: flex;
    align-items: center;
    justify-content: center;
  }
  .view.on {
    width: 38px;
    background: #c6c6c6;
  }
  .slider {
    position: relative;
    height: 1px;
    background: #999;
  }
  .slider i {
    position: absolute;
    left: 48px;
    top: -6px;
    width: 4px;
    height: 13px;
    background: #666;
  }
  .zoom {
    padding-left: 13px;
  }
</style>
